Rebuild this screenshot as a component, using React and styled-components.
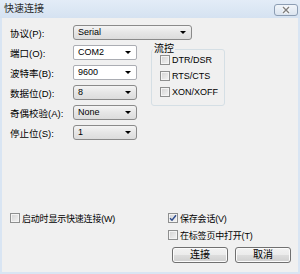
import styled, { createGlobalStyle } from 'styled-components'

const GlobalStyle = createGlobalStyle`
  html, body { margin: 0; padding: 0; background: #fff; }
  body {
    font-family: 'Liberation Sans', 'Noto Sans CJK SC', sans-serif;
    font-size: 10px;
    color: #000;
  }
`

const Window = styled.div`
  width: 300px;
  height: 274px;
  display: flex;
  flex-direction: column;
  background: #d9e5f3;
`

const TitleBar = styled.div`
  height: 18px;
  flex-shrink: 0;
  display: flex;
  align-items: flex-start;
  justify-content: space-between;
  background: linear-gradient(#e3ecf7, #d5e2f1);
`

const Title = styled.span`
  padding-left: 4px;
  line-height: 18px;
  font-size: 10px;
  color: #2b2b2b;
`

const CloseButton = styled.div`
  width: 22px;
  height: 10px;
  margin: 4px 2px 0 0;
  border: 1px solid #8c9db3;
  border-radius: 3px;
  background: linear-gradient(#f1f5fa, #dbe4ef);
  display: flex;
  align-items: center;
  justify-content: center;
`

const Body = styled.div`
  flex: 1;
  margin: 0 2px 2px;
  padding: 7px 0 9px 8px;
  background: #f0f0f0;
  display: flex;
  flex-direction: column;
`

const Row = styled.div`
  display: grid;
  grid-template-columns: 63px auto;
  align-items: center;
  height: 15px;
`

const Label = styled.span`
  white-space: nowrap;
  font-size: 9.5px;
`

const Select = styled.div`
  position: relative;
  box-sizing: border-box;
  width: ${props => props.width}px;
  height: 15px;
  padding-left: 4px;
  line-height: 13px;
  font-size: 9px;
  border: 1px solid ${props => (props.readOnly ? '#8a8a8a' : '#abadb3')};
  border-radius: ${props => (props.readOnly ? 3 : 2)}px;
  background: ${props => (props.readOnly ? 'linear-gradient(#f4f4f4, #e6e6e6 50%, #dcdcdc)' : '#fff')};
  &::after {
    content: '';
    position: absolute;
    right: 5px;
    top: 5px;
    border-left: 3px solid transparent;
    border-right: 3px solid transparent;
    border-top: 3px solid #000;
  }
`

const Middle = styled.div`
  display: flex;
  align-items: flex-start;
  margin-top: 5px;
`

const FieldColumn = styled.div`
  display: flex;
  flex-direction: column;
  gap: 5px;
`

const GroupBox = styled.fieldset`
  box-sizing: border-box;
  width: 74px;
  margin: -1px 0 0 14px;
  padding: 0 0 8px 8px;
  border: 1px solid #d5dfe5;
  border-radius: 3px;
  display: flex;
  flex-direction: column;
  gap: 6px;
`

const Legend = styled.legend`
  margin-left: -7px;
  padding: 0 1px;
  line-height: 10px;
  margin-bottom: 1px;
`

const CheckRow = styled.label`
  display: flex;
  align-items: center;
  height: 10px;
  font-size: 9px;
  letter-spacing: ${props => (props.latin ? 0 : -0.2)}px;
  white-space: nowrap;
`

const Box = styled.span`
  box-sizing: border-box;
  width: 10px;
  height: 10px;
  margin-right: 2px;
  border: 1px solid #8e8f8f;
  background: linear-gradient(135deg, #d2d2d2, #f4f4f4);
  box-shadow: inset 0 0 0 1px #f4f4f4;
  display: flex;
  align-items: center;
  justify-content: center;
  flex-shrink: 0;
`

const Bottom = styled.div`
  margin-top: auto;
  display: grid;
  grid-template-columns: 158px auto;
  align-items: start;
`

const RightColumn = styled.div`
  display: flex;
  flex-direction: column;
  gap: 7px;
`

const Buttons = styled.div`
  display: flex;
  gap: 7px;
  margin-left: 4px;
`

const Button = styled.div`
  box-sizing: border-box;
  width: 56px;
  height: 16px;
  border: 1px solid #707070;
  border-radius: 3px;
  background: linear-gradient(#f2f2f2, #ebebeb 50%, #dddddd 51%, #cfcfcf);
  box-shadow: inset 0 0 0 1px #fbfbfb;
  display: flex;
  align-items: center;
  justify-content: center;
  line-height: 14px;
`

function Check({ checked, latin, children }) {
  return (
    <CheckRow latin={latin}>
      <Box>
        {checked && (
          <svg width="8" height="8" viewBox="0 0 8 8">
            <path d="M1 4.2 L3 6.3 L7 1.2" fill="none" stroke="#2c4a8c" strokeWidth="1.4" />
          </svg>
        )}
      </Box>
      {children}
    </CheckRow>
  )
}

export default function App() {
  return (
    <>
      <GlobalStyle />
      <Window>
        <TitleBar>
          <Title>快速连接</Title>
          <CloseButton>
            <svg width="10" height="8" viewBox="0 0 10 8">
              <path d="M2 1 L8 7 M8 1 L2 7" stroke="#fff" strokeWidth="3" />
              <path d="M2 1 L8 7 M8 1 L2 7" stroke="#7d7d7d" strokeWidth="1.4" />
            </svg>
          </CloseButton>
        </TitleBar>
        <Body>
          <Row>
            <Label>协议(P):</Label>
            <Select width={119} readOnly>Serial</Select>
          </Row>
          <Middle>
            <FieldColumn>
              <Row>
                <Label>端口(O):</Label>
                <Select width={64}>COM2</Select>
              </Row>
              <Row>
                <Label>波特率(B):</Label>
                <Select width={64}>9600</Select>
              </Row>
              <Row>
                <Label>数据位(D):</Label>
                <Select width={64} readOnly>8</Select>
              </Row>
              <Row>
                <Label>奇偶校验(A):</Label>
                <Select width={64} readOnly>None</Select>
              </Row>
              <Row>
                <Label>停止位(S):</Label>
                <Select width={64} readOnly>1</Select>
              </Row>
            </FieldColumn>
            <GroupBox>
              <Legend>流控</Legend>
              <Check latin>DTR/DSR</Check>
              <Check latin>RTS/CTS</Check>
              <Check latin>XON/XOFF</Check>
            </GroupBox>
          </Middle>
          <Bottom>
            <Check>启动时显示快速连接(W)</Check>
            <RightColumn>
              <Check checked>保存会话(V)</Check>
              <Check>在标签页中打开(T)</Check>
              <Buttons>
                <Button>连接</Button>
                <Button>取消</Button>
              </Buttons>
            </RightColumn>
          </Bottom>
        </Body>
      </Window>
    </>
  )
}
